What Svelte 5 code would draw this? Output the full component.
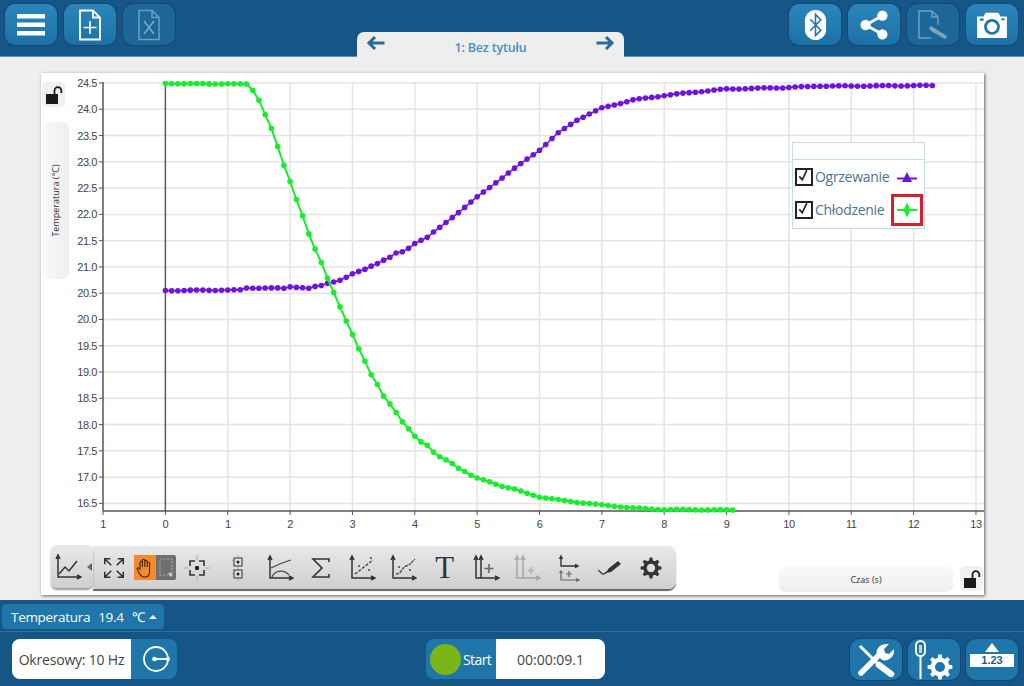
<script>
	// card-local plot geometry
	const cardX = 41;
	const cardY = 73;
	const tx = (t) => 165.4 + t * 62.35 - cardX;
	const py = (v) => 83 + (24.5 - v) * 52.55 - cardY;

	// [seconds, page y] read off the screenshot
	const purpleKeys = [
		[0, 290.5], [1.2, 290], [1.3, 288], [1.6, 288], [1.9, 288.3], [2, 286.7], [2.2, 287.5], [2.3, 288.3],
		[2.4, 286.7], [2.5, 285.7], [2.6, 283.3], [2.7, 281.7], [2.8, 280], [2.9, 277.3], [3, 274], [3.1, 271.7],
		[3.2, 269.3], [3.3, 266], [3.4, 263.3], [3.5, 260], [3.6, 257.3], [3.7, 253.3], [3.8, 252], [3.9, 248.3],
		[4, 243.3], [4.1, 240], [4.2, 237.3], [4.3, 232.3], [4.4, 227.7], [5, 197], [5.5, 173], [6, 150],
		[6.3, 133], [6.6, 120], [7, 108], [7.5, 100], [8, 95.5], [8.5, 92], [9, 89], [10, 87.5], [10.5, 86], [11, 86], [12.3, 85.5]
	];
	const greenKeys = [
		[0, 83.5], [1.3, 84], [1.4, 90], [1.5, 100], [1.6, 114.7], [1.7, 128.7], [1.8, 146.7], [1.9, 165.3], [2, 181.3],
		[2.1, 199.3], [2.2, 215.7], [2.3, 234], [2.4, 249.3], [2.5, 262.7], [2.6, 278.3], [2.7, 292.3], [2.8, 306.7],
		[2.9, 321], [3, 334.7], [3.1, 349], [3.2, 361.3], [3.3, 374.7], [3.4, 384.3], [3.5, 396], [3.6, 404], [3.7, 412.7],
		[3.8, 422], [3.9, 428.7], [4, 436], [4.1, 441.7], [4.2, 445.3], [4.3, 452.3], [4.4, 457], [4.5, 460], [4.6, 463.3],
		[4.7, 468], [4.8, 471.3], [4.9, 475.3], [5, 478.3], [5.2, 481.7], [5.4, 486.3], [5.6, 489.3], [5.8, 493.3], [6, 497],
		[6.5, 501.5], [7, 505], [7.5, 508], [8, 509.5], [9.15, 510]
	];

	function series(keys, wobble) {
		const end = keys[keys.length - 1][0];
		const pts = [];
		for (let t = 0; t <= end + 0.001; t += 0.1) {
			let i = 0;
			while (i < keys.length - 2 && keys[i + 1][0] < t) i++;
			const [t0, y0] = keys[i];
			const [t1, y1] = keys[i + 1];
			const y = y0 + ((y1 - y0) * (t - t0)) / (t1 - t0);
			pts.push([tx(t), y - cardY + Math.sin(t * 9.7) * wobble]);
		}
		return pts;
	}

	const purple = series(purpleKeys, 0.3);
	const green = series(greenKeys, 0.25);
	const line = (pts) => pts.map((p) => p[0].toFixed(1) + ',' + p[1].toFixed(1)).join(' ');

	const xTicks = Array.from({ length: 15 }, (_, i) => i - 1);
	const yTicks = Array.from({ length: 17 }, (_, i) => 16.5 + i * 0.5);

	function gear(cx, cy, outer, inner, teeth) {
		const step = (Math.PI * 2) / teeth;
		let d = '';
		for (let i = 0; i < teeth; i++) {
			const a = i * step;
			const c = [
				[a - step * 0.3, inner],
				[a - step * 0.17, outer],
				[a + step * 0.17, outer],
				[a + step * 0.3, inner]
			];
			for (const [ang, r] of c) {
				d += (d ? 'L' : 'M') + (cx + Math.cos(ang) * r).toFixed(2) + ' ' + (cy + Math.sin(ang) * r).toFixed(2);
			}
		}
		return d + 'Z';
	}
</script>

{#snippet lock()}
	<svg viewBox="0 0 20 22" width="20" height="22">
		<rect x="2" y="10" width="12" height="10" fill="#1f1a1a" />
		<path d="M10.500 10V6.500a3.400 3.400 0 0 1 6.800 0V9" fill="none" stroke="#1f1a1a" stroke-width="1.800" />
	</svg>
{/snippet}

{#snippet axes()}
	<path d="M4 3v21h22M2 6l2-4 2 4M23 22l4 2-4 2" fill="none" stroke="#333" stroke-width="1.500" />
{/snippet}

<div class="app">
	<header class="topbar">
		<div class="tools">
			<button class="tb" aria-label="Menu">
				<svg viewBox="0 0 32 32" width="32" height="32"><path d="M2 5h28v4.500H2zM2 13.500h28V18H2zM2 22h28v4.500H2z" fill="#fff" /></svg>
			</button>
			<button class="tb" aria-label="Nowy">
				<svg viewBox="0 0 26 32" width="26" height="32">
					<path d="M3 1.500h13l7 7v22H3z M16 1.500v7h7" fill="none" stroke="#fff" stroke-width="1.800" />
					<path d="M13 12v13M6.500 18.500h13" stroke="#fff" stroke-width="1.600" />
				</svg>
			</button>
			<button class="tb off" aria-label="Usuń">
				<svg viewBox="0 0 26 32" width="26" height="32">
					<path d="M3 1.500h13l7 7v22H3z M16 1.500v7h7" fill="none" stroke="#6aa0c4" stroke-width="1.500" />
					<path d="M8 12l10 13M18 12L8 25" stroke="#7eaecd" stroke-width="1.500" />
				</svg>
			</button>
		</div>

		<div class="tab">
			<svg viewBox="0 0 20 16" width="20" height="16"><path d="M18.500 8H3M9 2 3 8l6 6" fill="none" stroke="#2f6a94" stroke-width="3" /></svg>
			<span class="tab-title">1: Bez tytułu</span>
			<svg viewBox="0 0 20 16" width="20" height="16"><path d="M1.500 8H17M11 2l6 6-6 6" fill="none" stroke="#2f6a94" stroke-width="3" /></svg>
		</div>

		<div class="tools right">
			<button class="tb" aria-label="Bluetooth">
				<svg viewBox="0 0 26 36" width="23" height="32">
					<rect x="1" y="1" width="24" height="34" rx="12" fill="#fff" />
					<path d="M7 11.500 19 24l-6 6V6l6 6L7 24.500" fill="none" stroke="#1f76ab" stroke-width="1.800" />
				</svg>
			</button>
			<button class="tb" aria-label="Udostępnij">
				<svg viewBox="0 0 30 32" width="28" height="30">
					<path d="M24 6 6 16l18 10" fill="none" stroke="#fff" stroke-width="3" />
					<circle cx="24" cy="6" r="5.500" fill="#fff" /><circle cx="6" cy="16" r="5.500" fill="#fff" /><circle cx="24" cy="26" r="5.500" fill="#fff" />
				</svg>
			</button>
			<button class="tb off" aria-label="Notatka">
				<svg viewBox="0 0 34 32" width="34" height="32">
					<path d="M15 29H3V2h13l6 6v8M16 2v6h6" fill="none" stroke="#6aa0c4" stroke-width="1.500" />
					<path d="M13 19l2-2 16 10-2 3-14-8z" fill="#7ba6c2" />
				</svg>
			</button>
			<button class="tb" aria-label="Zdjęcie">
				<svg viewBox="0 0 34 30" width="32" height="28">
					<path d="M1 6h7l2-4h14l2 4h7v23H1z" fill="#fff" />
					<circle cx="17" cy="17" r="7" fill="none" stroke="#1f76ab" stroke-width="3" />
					<rect x="4" y="8" width="4" height="2.500" fill="#1f76ab" /><rect x="27" y="8" width="3.500" height="2" fill="#1f76ab" />
				</svg>
			</button>
		</div>
	</header>

	<main class="stage">
		<section class="card">
			<svg class="plot" viewBox="0 0 943 522" width="943" height="522">
				{#each yTicks as v}
					<line x1="62" x2="943" y1={py(v)} y2={py(v)} class="grid" />
					<line x1="58" x2="62" y1={py(v)} y2={py(v)} class="axis" />
					<text x="56" y={py(v) + 4} text-anchor="end" class="tick">{v.toFixed(1)}</text>
				{/each}
				{#each xTicks as t}
					{#if t > 0}
						<line x1={tx(t)} x2={tx(t)} y1="9" y2="438" class="grid" />
					{/if}
					<line x1={tx(t)} x2={tx(t)} y1="438" y2="442" class="axis" />
					<text x={tx(t)} y="455" text-anchor="middle" class="tick">{Math.abs(t)}</text>
				{/each}
				<line x1="62" x2="62" y1="9" y2="438" class="axis strong" />
				<line x1="62" x2="943" y1="438" y2="438" class="axis strong" />
				<line x1={tx(0)} x2={tx(0)} y1="9" y2="438" class="zero" />

				<polyline points={line(purple)} fill="none" stroke="#6f13e0" stroke-width="1.500" />
				{#each purple as p}
					<circle cx={p[0]} cy={p[1]} r="2.800" fill="#6f13e0" />
				{/each}
				<polyline points={line(green)} fill="none" stroke="#17ee2c" stroke-width="2" />
				{#each green as p}
					<circle cx={p[0]} cy={p[1]} r="2.800" fill="#17ee2c" />
				{/each}
			</svg>

			<div class="lock lock-y">{@render lock()}</div>
			<div class="axis-tab axis-y"><span>Temperatura (°C)</span></div>

			<div class="legend">
				<div class="legend-head"></div>
				<div class="legend-row">
					<span class="check"><svg viewBox="0 0 18 18" width="18" height="18"><path d="M4 9.500l3.500 4L13 2" fill="none" stroke="#222" stroke-width="2" /></svg></span>
					<span class="legend-name">Ogrzewanie</span>
					<span class="marker">
						<svg viewBox="0 0 22 14" width="22" height="14"><path d="M1 8.500h20" stroke="#6f13e0" stroke-width="2" /><path d="M11 2l5 10H6z" fill="#6f13e0" /></svg>
					</span>
				</div>
				<div class="legend-row">
					<span class="check"><svg viewBox="0 0 18 18" width="18" height="18"><path d="M4 9.500l3.500 4L13 2" fill="none" stroke="#222" stroke-width="2" /></svg></span>
					<span class="legend-name">Chłodzenie</span>
					<span class="marker picked">
						<svg viewBox="0 0 22 18" width="22" height="18"><path d="M1 9h20" stroke="#17ee2c" stroke-width="2" /><path d="M11 1.500l3.500 7.500-3.500 7.500-3.500-7.500z" fill="#17ee2c" /></svg>
					</span>
				</div>
			</div>

			<div class="toolbar">
				<div class="mode">
					<svg viewBox="0 0 28 28" width="28" height="28">
						{@render axes()}
						<path d="M5 21l6-7 4 4 8-10" fill="none" stroke="#333" stroke-width="1.500" />
					</svg>
					<i class="caret"></i>
				</div>
				<div class="strip">
					<span class="ic">
						<svg viewBox="0 0 26 26" width="24" height="24">
							<path d="M4 4l6 6M22 4l-6 6M4 22l6-6M22 22l-6-6M3 9V3h6M17 3h6v6M3 17v6h6M23 17v6h-6" fill="none" stroke="#333" stroke-width="1.700" />
						</svg>
					</span>
					<span class="ic hand">
						<span class="hand-on">
							<svg viewBox="0 0 20 22" width="20" height="22">
								<path d="M5 12V5.500a1.200 1.200 0 0 1 2.400 0V10 3.500a1.200 1.200 0 0 1 2.400 0V10 4.500a1.200 1.200 0 0 1 2.400 0V10 6.500a1.200 1.200 0 0 1 2.400 0V15c0 3-2 5-5 5s-4-1-5.500-4L2 11.500c1-1.200 2-.5 3 .5z" fill="#f58a26" stroke="#3a2410" stroke-width="1.100" />
							</svg>
						</span>
						<span class="hand-off">
							<svg viewBox="0 0 16 22" width="16" height="22"><path d="M2 2h12v16H2z" fill="none" stroke="#a8a8a8" stroke-width="1.200" stroke-dasharray="2 1.500" /><path d="M11 16l3 3" stroke="#c8c8c8" stroke-width="2.500" /></svg>
						</span>
					</span>
					<span class="ic">
						<svg viewBox="0 0 26 26" width="26" height="26">
							<path d="M13 0v5M13 21v5M0 13h5M21 13h5" stroke="#aaa" />
							<path d="M6 11V6h5M15 6h5v5M20 15v5h-5M11 20H6v-5" fill="none" stroke="#333" stroke-width="1.600" />
							<circle cx="13" cy="13" r="2.200" fill="#222" />
						</svg>
					</span>
					<span class="ic">
						<svg viewBox="0 0 26 26" width="26" height="26">
							<path d="M13 0v26M7 6h12M7 19h12" stroke="#aaa" />
							<rect x="9" y="3" width="8" height="8" fill="#ddd" stroke="#444" stroke-width="1.100" /><rect x="9" y="15" width="8" height="8" fill="#ddd" stroke="#444" stroke-width="1.100" />
							<circle cx="13" cy="7" r="1.500" fill="#222" /><circle cx="13" cy="19" r="1.500" fill="#222" />
						</svg>
					</span>
					<span class="ic">
						<svg viewBox="0 0 28 28" width="28" height="28">
							{@render axes()}
							<path d="M5 14c6-3 13-6 20-8M6 23c3-7 12-8 17-2" fill="none" stroke="#444" stroke-width="1.200" />
						</svg>
					</span>
					<span class="ic">
						<svg viewBox="0 0 24 24" width="24" height="24"><path d="M20 6V3H4l9 9-9 9h16v-3" fill="none" stroke="#333" stroke-width="1.600" /></svg>
					</span>
					<span class="ic">
						<svg viewBox="0 0 28 28" width="28" height="28">
							{@render axes()}
							<path d="M7 20 25 6" fill="none" stroke="#444" stroke-width="1.300" stroke-dasharray="3 1.500" />
							<circle cx="11" cy="12" r="1" fill="#444" /><circle cx="21" cy="16" r="1" fill="#444" /><circle cx="23" cy="4" r="1" fill="#444" />
						</svg>
					</span>
					<span class="ic">
						<svg viewBox="0 0 28 28" width="28" height="28">
							{@render axes()}
							<path d="M7 20c6 0 6-7 10-8s5-3 9-7" fill="none" stroke="#444" stroke-width="1.300" stroke-dasharray="3 1" />
							<circle cx="10" cy="13" r="1" fill="#444" /><circle cx="21" cy="16" r="1" fill="#444" />
						</svg>
					</span>
					<span class="ic t">T</span>
					<span class="ic">
						<svg viewBox="0 0 28 28" width="28" height="28">
							{@render axes()}
							<path d="M9 24V3M7 6l2-4 2 4" fill="none" stroke="#333" stroke-width="1.500" />
							<path d="M17 10v9M12.500 14.500h9" stroke="#666" stroke-width="1.600" />
						</svg>
					</span>
					<span class="ic dim">
						<svg viewBox="0 0 28 28" width="28" height="28">
							{@render axes()}
							<path d="M10 24V3M8 6l2-4 2 4" fill="none" stroke="#333" stroke-width="1.500" />
							<path d="M18 13v7M15 16.500h6" stroke="#555" stroke-width="1.400" />
						</svg>
					</span>
					<span class="ic">
						<svg viewBox="0 0 28 28" width="28" height="28">
							<path d="M6 2v10h16M4.500 5 6 2l1.500 3M20 10.500l3 1.500-3 1.500" fill="none" stroke="#333" stroke-width="1.400" />
							<path d="M6 17v9h17M4.500 19 6 17l1.500 2M21 24.500l3 1.500-3 1.500" fill="none" stroke="#666" stroke-width="1.200" />
							<path d="M14 17v6M11 20h6" stroke="#666" stroke-width="1.200" />
						</svg>
					</span>
					<span class="ic">
						<svg viewBox="0 0 26 26" width="26" height="26">
							<path d="M1 15c2 1 4 5 6 4s2-2 4-3" fill="none" stroke="#333" stroke-width="1.300" />
							<path d="M11 14 21 6l3 3-10 8-4 1z" fill="#333" />
						</svg>
					</span>
					<span class="ic">
						<svg viewBox="0 0 24 24" width="24" height="24">
							<path d={gear(12, 12, 10.5, 7.800, 8)} fill="#333" />
							<circle cx="12" cy="12" r="4.200" fill="#dcdcde" />
						</svg>
					</span>
				</div>
			</div>

			<div class="axis-tab axis-x"><span>Czas (s)</span></div>
			<div class="lock lock-x">{@render lock()}</div>
		</section>
	</main>

	<footer class="bottom">
		<div class="sensor-row">
			<button class="sensor">
				<span>Temperatura</span><span>19.4</span><span>℃</span>
				<i class="up"></i>
			</button>
		</div>
		<div class="control-row">
			<div class="rate">
				<span class="rate-text">Okresowy: 10 Hz</span>
				<span class="rate-btn">
					<svg viewBox="0 0 32 32" width="32" height="32">
						<circle cx="18" cy="16" r="12" fill="none" stroke="#fff" stroke-width="1.800" />
						<path d="M16 16h14" stroke="#fff" stroke-width="1.800" /><circle cx="16.500" cy="16" r="2.300" fill="#fff" /><circle cx="30" cy="16" r="2" fill="#fff" />
					</svg>
				</span>
			</div>
			<div class="run">
				<span class="run-btn"><i class="dot"></i>Start</span>
				<span class="clock">00:00:09.1</span>
			</div>
			<div class="tools right">
				<button class="tb low" aria-label="Narzędzia">
					<svg viewBox="0 0 42 34" width="42" height="34">
						<path d="M5 3l18 18" stroke="#fff" stroke-width="3" />
						<path d="M24 22l12 9" stroke="#fff" stroke-width="6.500" stroke-linecap="round" />
						<path d="M6 30 26 10" stroke="#fff" stroke-width="5.500" stroke-linecap="round" />
						<path d="M22 12c-2-6 3-12 12-11l-5 5 1 4 4 1 5-5c1 8-6 13-12 11z" fill="#fff" />
					</svg>
				</button>
				<button class="tb low" aria-label="Czujnik">
					<svg viewBox="0 0 42 40" width="42" height="40">
						<rect x="3" y="1" width="9" height="15" rx="4.500" fill="none" stroke="#fff" stroke-width="2" />
						<path d="M7.500 16v23" stroke="#fff" stroke-width="2" />
						<path d="M7.500 5v8" stroke="#bcd6e6" stroke-width="3" />
						<path d={gear(27, 27, 12.5, 9.500, 8)} fill="#fff" />
						<circle cx="27" cy="27" r="5" fill="#1f76ab" />
					</svg>
				</button>
				<button class="tb low meter" aria-label="Miernik">
					<i class="meter-up"></i>
					<span class="meter-val">1.23</span>
				</button>
			</div>
		</div>
	</footer>
</div>

<style>
	:global(body) {
		margin: 0;
		background: #eee;
	}

	.app {
		width: 1024px;
		height: 686px;
		display: flex;
		flex-direction: column;
		overflow: hidden;
		font-family: 'Open Sans', sans-serif;
	}

	/* top bar */
	.topbar {
		flex: none;
		height: 57px;
		box-sizing: border-box;
		display: grid;
		grid-template-columns: 357px 267px 1fr;
		background: #155686;
		border-bottom: 1px solid #5d8fb2;
	}

	.tools {
		display: flex;
		gap: 7px;
		padding: 4px 0 0 5px;
	}

	.tools.right {
		justify-content: flex-end;
		padding: 4px 6px 0 0;
	}

	.tb {
		width: 52px;
		height: 41px;
		padding: 0;
		display: flex;
		align-items: center;
		justify-content: center;
		border: 0;
		border-radius: 10px;
		box-shadow: 0 0 0 1px #124a75;
		background: linear-gradient(#2c86ba, #1b71a7);
	}

	.tb.off {
		background: #1c6797;
	}

	.tab {
		height: 25px;
		margin-top: 32px;
		padding: 3px 9px 0;
		display: flex;
		align-items: flex-start;
		justify-content: space-between;
		background: #eee;
		border-radius: 7px 7px 0 0;
		box-sizing: border-box;
		position: relative;
		z-index: 1;
	}

	.tab-title {
		margin-top: 4px;
		font-size: 12.5px;
		font-weight: 600;
		letter-spacing: -0.2px;
		color: #4a90c0;
	}

	/* chart card */
	.stage {
		flex: 1;
		min-height: 0;
		padding: 16px 40px 5px 41px;
		background: #eee;
	}

	.card {
		position: relative;
		height: 100%;
		background: #fff;
		box-shadow: 1px 1px 3px #666;
	}

	.plot {
		display: block;
	}

	.grid {
		stroke: #e4e4e4;
		stroke-width: 1.5;
	}

	.axis {
		stroke: #555;
		stroke-width: 1;
	}

	.axis.strong {
		stroke-width: 1.5;
	}

	.zero {
		stroke: #5c5c5c;
		stroke-width: 1.5;
	}

	.tick {
		font-family: 'Liberation Sans', sans-serif;
		font-size: 11px;
		letter-spacing: -0.4px;
		fill: #444;
	}

	.lock {
		position: absolute;
		width: 23px;
		height: 25px;
		display: flex;
		align-items: center;
		justify-content: center;
		background: #f0f0f0;
		border-radius: 5px;
	}

	.lock-y {
		left: 1px;
		top: 9px;
	}

	.lock-x {
		left: 919px;
		top: 493px;
	}

	.axis-tab {
		position: absolute;
		display: flex;
		align-items: center;
		justify-content: center;
		background: linear-gradient(#f9f9f9, #eee);
		border-radius: 7px;
		font-size: 9px;
		color: #333;
	}

	.axis-y {
		left: 1px;
		top: 49px;
		width: 27px;
		height: 157px;
		background: linear-gradient(90deg, #f9f9f9, #eee);
	}

	.axis-y span {
		transform: rotate(-90deg);
		white-space: nowrap;
	}

	.axis-x {
		left: 738px;
		top: 493px;
		width: 174px;
		height: 26px;
	}

	/* legend */
	.legend {
		position: absolute;
		left: 751px;
		top: 69px;
		width: 133px;
		height: 87px;
		border: 1px solid #c5dcec;
		background: #fff;
		box-sizing: border-box;
	}

	.legend-head {
		height: 16px;
		border-bottom: 1px solid #c5dcec;
	}

	.legend-row {
		height: 33px;
		display: flex;
		align-items: center;
		padding-left: 2px;
		font-size: 14px;
		color: #4a7396;
	}

	.check {
		width: 14px;
		height: 14px;
		flex: none;
		display: flex;
		border: 2px solid #222;
	}

	.check svg {
		margin: -2px 0 0 -1px;
		width: 16px;
		height: 16px;
	}

	.legend-name {
		margin-left: 2px;
		flex: 1;
		white-space: nowrap;
		letter-spacing: -0.3px;
	}

	.marker {
		width: 32px;
		height: 32px;
		flex: none;
		display: flex;
		align-items: center;
		justify-content: center;
		box-sizing: border-box;
		margin-right: 1px;
	}

	.marker.picked {
		border: 3px solid #d8202c;
	}

	/* chart toolbar */
	.toolbar {
		position: absolute;
		left: 10px;
		top: 472px;
		display: flex;
	}

	.mode {
		position: relative;
		z-index: 1;
		width: 42px;
		height: 43px;
		display: flex;
		align-items: center;
		padding-left: 3px;
		box-sizing: border-box;
		background: linear-gradient(#e9e9eb, #cfcfd2);
		border-radius: 6px;
		box-shadow: 0 2px 2px #999;
	}

	.caret {
		position: absolute;
		right: 1px;
		top: 18px;
		border: 4px solid transparent;
		border-left: 0;
		border-right: 5px solid #666;
	}

	.strip {
		width: 583px;
		height: 43px;
		margin-top: 1px;
		display: flex;
		align-items: center;
		box-sizing: border-box;
		background: linear-gradient(#e9e9eb, #cfcfd2);
		border-radius: 0 8px 8px 0;
		box-shadow: 0 2px 1px #666;
	}

	.ic {
		width: 41.3px;
		flex: none;
		display: flex;
		align-items: center;
		justify-content: center;
	}

	.ic.dim {
		opacity: 0.3;
	}

	.ic.t {
		font-family: 'Liberation Serif', serif;
		font-size: 31px;
		line-height: 1;
		color: #333;
	}

	.ic.hand {
		height: 25px;
		width: 42px;
		background: #6f6f6f;
		border-radius: 2px;
		justify-content: flex-start;
	}

	.hand-on {
		width: 22px;
		height: 25px;
		display: flex;
		align-items: center;
		justify-content: center;
		background: #f58a26;
	}

	.hand-off {
		width: 20px;
		display: flex;
		justify-content: center;
	}

	/* bottom bar */
	.bottom {
		flex: none;
		height: 86px;
		background: #155686;
	}

	.sensor-row {
		height: 32px;
		box-sizing: border-box;
		padding: 4px 0 0 2px;
		border-bottom: 1px solid #2f6f9d;
	}

	.sensor {
		width: 162px;
		height: 25px;
		padding: 0 0 0 9px;
		display: flex;
		align-items: center;
		gap: 8px;
		border: 0;
		border-radius: 4px;
		background: #1f76ab;
		font: 13.5px 'Open Sans', sans-serif;
		letter-spacing: -0.3px;
		color: #fff;
	}

	.up {
		margin-left: -3px;
		border: 4px solid transparent;
		border-top: 0;
		border-bottom: 4px solid #fff;
	}

	.control-row {
		height: 54px;
		box-sizing: border-box;
		padding: 7px 0 0 12px;
		display: flex;
		align-items: flex-start;
	}

	.rate,
	.run {
		height: 40px;
		display: flex;
		border-radius: 8px;
		overflow: hidden;
		box-sizing: border-box;
		background: #1f76ab;
	}

	.rate {
		width: 165px;
	}

	.rate-text {
		width: 119px;
		display: flex;
		align-items: center;
		justify-content: center;
		background: #fff;
		font-size: 14px;
		letter-spacing: -0.2px;
		color: #444;
	}

	.rate-btn {
		flex: 1;
		display: flex;
		align-items: center;
		justify-content: center;
	}

	.run {
		width: 179px;
		margin-left: 249px;
	}

	.run-btn {
		width: 70px;
		display: flex;
		align-items: center;
		gap: 2px;
		padding-left: 4px;
		box-sizing: border-box;
		font-size: 14px;
		letter-spacing: -0.6px;
		color: #fff;
	}

	.dot {
		width: 31px;
		height: 31px;
		border-radius: 50%;
		background: #7cb518;
	}

	.clock {
		flex: 1;
		display: flex;
		align-items: center;
		justify-content: center;
		background: #fff;
		font-size: 14px;
		color: #444;
	}

	.control-row .tools.right {
		flex: 1;
		padding: 0 6px 0 0;
		gap: 6px;
	}

	.tb.low {
		height: 41px;
		background: #1f76ab;
	}

	.meter {
		flex-direction: column;
		justify-content: flex-start;
		padding-top: 4px;
		box-sizing: border-box;
		gap: 2px;
	}

	.meter-up {
		border: 7px solid transparent;
		border-top: 0;
		border-bottom: 9px solid #fff;
	}

	.meter-val {
		width: 44px;
		height: 13px;
		display: block;
		background: #fff;
		font: bold 11px/13px 'Liberation Sans', sans-serif;
		color: #1f5f8c;
		text-align: center;
	}
</style>
